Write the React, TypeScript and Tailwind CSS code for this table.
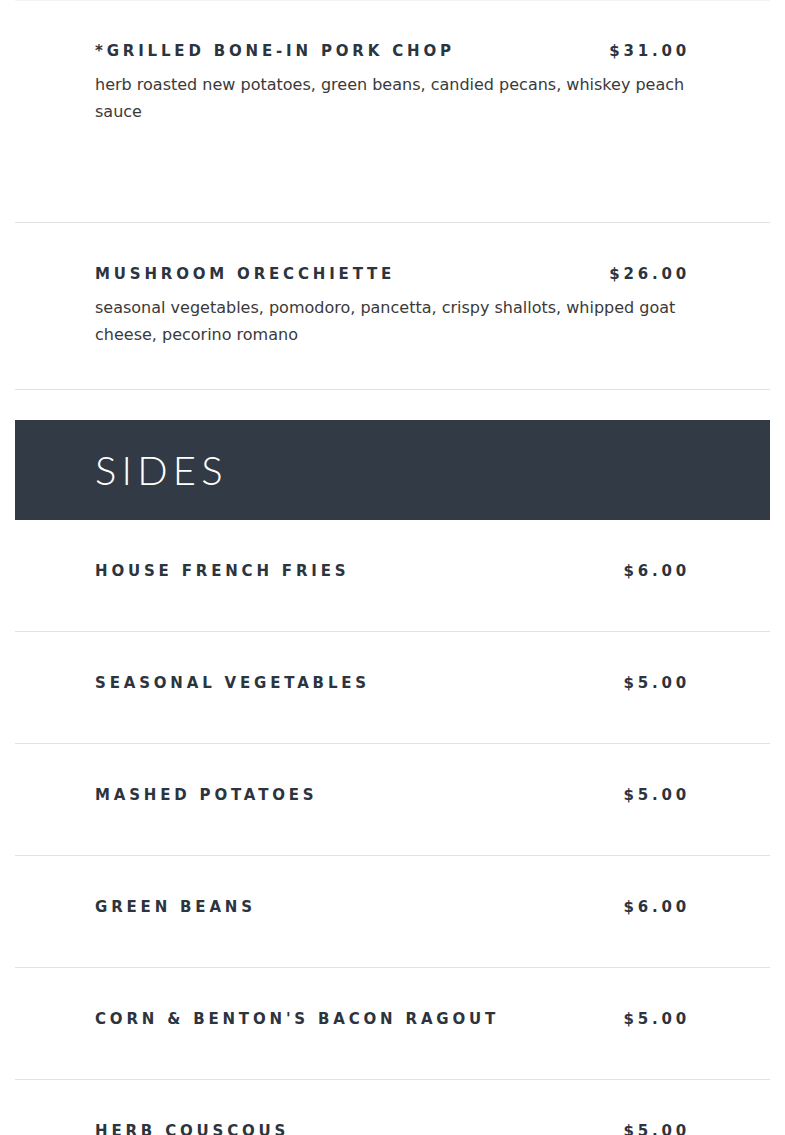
import React from 'react'

type Item = { name: string; price: string; desc?: string }

const mains: Item[] = [
  {
    name: '*Grilled Bone-In Pork Chop',
    price: '$31.00',
    desc: 'herb roasted new potatoes, green beans, candied pecans, whiskey peach sauce',
  },
  {
    name: 'Mushroom Orecchiette',
    price: '$26.00',
    desc: 'seasonal vegetables, pomodoro, pancetta, crispy shallots, whipped goat cheese, pecorino romano',
  },
]

const sides: Item[] = [
  { name: 'House French Fries', price: '$6.00' },
  { name: 'Seasonal Vegetables', price: '$5.00' },
  { name: 'Mashed Potatoes', price: '$5.00' },
  { name: 'Green Beans', price: '$6.00' },
  { name: "Corn & Benton's Bacon Ragout", price: '$5.00' },
  { name: 'Herb Couscous', price: '$5.00' },
]

function MenuItem({ item, first }: { item: Item; first?: boolean }) {
  return (
    <div
      className={`border-b border-[#e2e2e2] px-20 ${
        first ? 'pt-10 pb-[97px]' : item.desc ? 'pt-[41px] pb-[41px]' : 'pt-[41px] pb-10'
      }`}
    >
      <div className="flex justify-between items-center h-5 mb-[10px] text-[15px] font-bold uppercase tracking-[0.255em] text-[#2c343e] font-['DejaVu_Sans',sans-serif]">
        <span>{item.name}</span>
        <span>{item.price}</span>
      </div>
      {item.desc && (
        <p className="text-[16px] leading-[27px] text-[#3a3a3a] font-['DejaVu_Sans',sans-serif]">
          {item.desc}
        </p>
      )}
    </div>
  )
}

export default function App() {
  return (
    <div className="bg-white min-h-screen px-[15px]">
      <div className="border-t border-[#f3f3f3]">
        <MenuItem item={mains[0]} first />
        <MenuItem item={mains[1]} />
      </div>

      <div className="mt-[30px] h-[100px] bg-[#323b45] px-20 flex items-center">
        <h2 className="text-white text-[40px] font-light tracking-[0.13em] font-['Lato',sans-serif]">
          SIDES
        </h2>
      </div>

      <div>
        {sides.map((s) => (
          <MenuItem key={s.name} item={s} />
        ))}
      </div>
    </div>
  )
}
